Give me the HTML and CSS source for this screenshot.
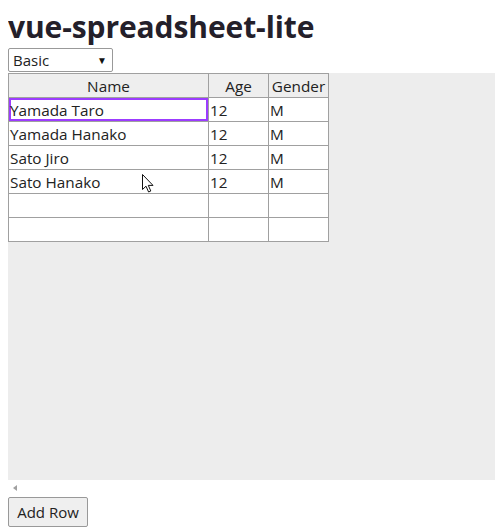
FILE: index.html
```html
<!DOCTYPE html>
<html>
<head>
<meta charset="utf-8">
<link rel="stylesheet" href="styles.css">
</head>
<body>
<h1 class="title">vue-spreadsheet-lite</h1>
<div class="select"><span class="select-text">Basic</span><span class="select-arrow">▼</span></div>
<div class="sheet">
  <table class="grid">
    <colgroup><col class="c-name"><col class="c-age"><col class="c-gender"></colgroup>
    <thead>
      <tr><th>Name</th><th>Age</th><th>Gender</th></tr>
    </thead>
    <tbody>
      <tr><td class="selected">Yamada Taro</td><td>12</td><td>M</td></tr>
      <tr><td>Yamada Hanako</td><td>12</td><td>M</td></tr>
      <tr><td>Sato Jiro</td><td>12</td><td>M</td></tr>
      <tr><td>Sato Hanako</td><td>12</td><td>M</td></tr>
      <tr><td></td><td></td><td></td></tr>
      <tr><td></td><td></td><td></td></tr>
    </tbody>
  </table>
  <svg class="cursor" width="12" height="19" viewBox="0 0 12 19"><path d="M0.5 0.5 L0.5 15.5 L4 12.2 L6.6 18 L8.8 17 L6.3 11.4 L11 11.4 Z" fill="#fff" stroke="#111" stroke-width="1"/></svg>
</div>
<div class="hscroll"><span class="arrow-left"></span></div>
<button class="add-row">Add Row</button>
</body>
</html>
```
FILE: styles.css
```css
html {
  margin: 0;
  padding: 0;
  background: #fff;
  overflow: hidden;
}
body {
  margin: 8px 0 0 8px;
  font-family: "Open Sans", "Noto Sans", sans-serif;
  color: #222;
}
.title {
  margin: 0;
  height: 40px;
  font-size: 30px;
  line-height: 38px;
  font-weight: 700;
  color: #24202a;
  letter-spacing: -0.1px;
}
.select {
  height: 22px;
  border: 1px solid #999;
  border-radius: 2px;
  display: flex;
  align-items: center;
  justify-content: space-between;
  padding: 0 4px 0 4px;
  box-sizing: content-box;
  width: 95px;
  font-size: 15px;
  margin-bottom: 1px;
}
.select-arrow {
  font-size: 10px;
  color: #111;
  padding-right: 1px;
}
.sheet {
  position: relative;
  background: #ededed;
  height: 407px;
}
.grid {
  border-collapse: collapse;
  table-layout: fixed;
  width: 321px;
  font-size: 15.3px;
}
.c-name { width: 200px; }
.c-age { width: 60px; }
.c-gender { width: 60px; }
.grid th, .grid td {
  border: 1px solid #a0a0a0;
  height: 24px;
  padding: 0 1px;
  box-sizing: border-box;
  white-space: nowrap;
  overflow: hidden;
  line-height: 22px;
}
.grid th {
  background: #eee;
  font-weight: 400;
  text-align: center;
}
.grid td {
  background: #fff;
  text-align: left;
}
.grid td.selected {
  box-shadow: inset 0 0 0 2px #9c3cff;
}
.cursor {
  position: absolute;
  left: 134px;
  top: 101px;
}
.hscroll {
  height: 15px;
  display: flex;
  align-items: center;
  padding-left: 5px;
}
.arrow-left {
  width: 0;
  height: 0;
  border-top: 3.5px solid transparent;
  border-bottom: 3.5px solid transparent;
  border-right: 4px solid #a0a0a0;
}
.add-row {
  margin-top: 2px;
  height: 30px;
  width: 80px;
  padding: 0;
  font-family: inherit;
  font-size: 15px;
  color: #222;
  background: #efefef;
  border: 1px solid #999;
  border-radius: 2px;
}
```
